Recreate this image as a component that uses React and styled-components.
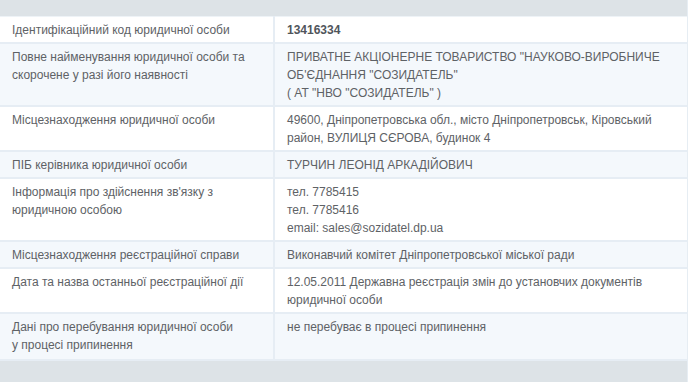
import React from "react";
import styled, { createGlobalStyle } from "styled-components";

const GlobalStyle = createGlobalStyle`
  html, body {
    margin: 0;
    padding: 0;
    background: #ffffff;
  }
  body {
    font-family: "Liberation Sans", Arial, sans-serif;
  }
`;

const rows = [
  { label: ["Ідентифікаційний код юридичної особи"], value: ["13416334"], bold: true },
  {
    label: ["Повне найменування юридичної особи та", "скорочене у разі його наявності"],
    value: [
      "ПРИВАТНЕ АКЦІОНЕРНЕ ТОВАРИСТВО \"НАУКОВО-ВИРОБНИЧЕ",
      "ОБ'ЄДНАННЯ \"СОЗИДАТЕЛЬ\"",
      "( АТ \"НВО \"СОЗИДАТЕЛЬ\" )",
    ],
  },
  {
    label: ["Місцезнаходження юридичної особи"],
    value: [
      "49600, Дніпропетровська обл., місто Дніпропетровськ, Кіровський",
      "район, ВУЛИЦЯ СЄРОВА, будинок 4",
    ],
  },
  { label: ["ПІБ керівника юридичної особи"], value: ["ТУРЧИН ЛЕОНІД АРКАДІЙОВИЧ"] },
  {
    label: ["Інформація про здійснення зв'язку з", "юридичною особою"],
    value: ["тел. 7785415", "тел. 7785416", "email: sales@sozidatel.dp.ua"],
  },
  {
    label: ["Місцезнаходження реєстраційної справи"],
    value: ["Виконавчий комітет Дніпропетровської міської ради"],
  },
  {
    label: ["Дата та назва останньої реєстраційної дії"],
    value: ["12.05.2011 Державна реєстрація змін до установчих документів", "юридичної особи"],
  },
  {
    label: ["Дані про перебування юридичної особи", "у процесі припинення"],
    value: ["не перебуває в процесі припинення"],
    tall: true,
  },
];

const Wrap = styled.div`
  width: 687px;
  border-right: 1px solid #e6edf3;
  border-bottom: 2px solid #eef2f5;
`;

const Table = styled.table`
  width: 100%;
  border-collapse: collapse;
  font-size: 12px;
  line-height: 18px;
  color: #5e6266;
`;

const Bar = styled.tr`
  background: #dde3e7;
  td {
    height: 16px;
    padding: 0;
    border-bottom: 1px solid #eef3f7;
  }
`;

const FootBar = styled(Bar)`
  td {
    height: 21px;
    border-bottom: none;
  }
`;

const Row = styled.tr`
  background: ${(p) => (p.$alt ? "#f4f8fc" : "#ffffff")};
`;

const Cell = styled.td`
  vertical-align: top;
  padding: 4px 12px ${(p) => (p.$tall ? "5px" : "3px")} 12px;
  border-bottom: 2px solid #e6edf4;
  white-space: nowrap;
`;

const LabelCell = styled(Cell)`
  width: 249px;
  border-right: 2px solid #e6edf4;
`;

const ValueCell = styled(Cell)`
  font-weight: ${(p) => (p.$bold ? "bold" : "normal")};
  color: ${(p) => (p.$bold ? "#50555b" : "#5e6266")};
`;

const Lines = ({ items }) =>
  items.map((t, i) => (
    <React.Fragment key={i}>
      {i > 0 && <br />}
      {t}
    </React.Fragment>
  ));

export default function App() {
  return (
    <>
      <GlobalStyle />
      <Wrap>
        <Table>
          <tbody>
            <Bar>
              <td colSpan={2} />
            </Bar>
            {rows.map((r, i) => (
              <Row key={i} $alt={i % 2 === 1}>
                <LabelCell $tall={r.tall}>
                  <Lines items={r.label} />
                </LabelCell>
                <ValueCell $bold={r.bold} $tall={r.tall}>
                  <Lines items={r.value} />
                </ValueCell>
              </Row>
            ))}
            <FootBar>
              <td colSpan={2} />
            </FootBar>
          </tbody>
        </Table>
      </Wrap>
    </>
  );
}
